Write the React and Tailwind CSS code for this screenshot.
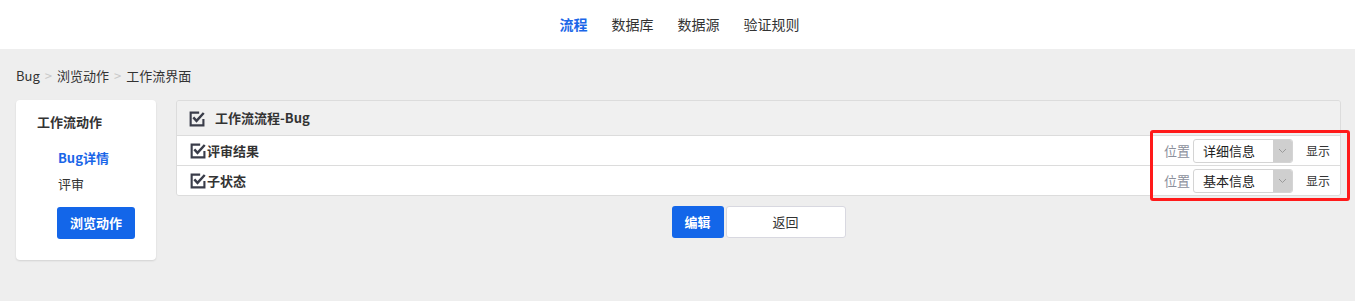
import React from "react";

function CheckIcon() {
  return (
    <svg width="17" height="17" viewBox="0 0 16 16" className="shrink-0">
      <path d="M10.5 2.5H2.5V14.5H14.5V8.5" fill="none" stroke="#3a3d4a" strokeWidth="2" />
      <path d="M5 7L8 10.2L14.8 2.8" fill="none" stroke="#3a3d4a" strokeWidth="2.3" />
    </svg>
  );
}

function SelectBox({ value }) {
  return (
    <div className="flex h-[24px] w-[100px] items-stretch rounded-[3px] border border-[#d4d4d4] bg-white">
      <span className="flex flex-1 items-center pl-[9px] text-[13px] text-[#222]">{value}</span>
      <span className="flex w-[19px] items-center justify-center rounded-r-[2px] bg-[#cfcfcf]">
        <svg width="9" height="6" viewBox="0 0 9 6">
          <path d="M1 1L4.5 4.5L8 1" fill="none" stroke="#9a9a9a" strokeWidth="1" />
        </svg>
      </span>
    </div>
  );
}

function FieldRow({ label, value }) {
  return (
    <div className="flex h-[30px] items-center border-t border-[#dcdcdc] bg-white pl-[12px] pr-[10px]">
      <CheckIcon />
      <span className="ml-[1px] text-[13px] font-bold text-[#333]">{label}</span>
      <div className="ml-auto flex items-center">
        <span className="mr-[3px] text-[13px] text-[#8b8f9c]">位置</span>
        <SelectBox value={value} />
        <span className="ml-[13px] text-[12px] text-[#333]">显示</span>
      </div>
    </div>
  );
}

export default function App() {
  const font = { fontFamily: '"Noto Sans CJK SC", "Noto Sans", sans-serif' };
  return (
    <div className="min-h-[301px] bg-[#eeeeee]" style={font}>
      {/* Top nav */}
      <div className="flex h-[49px] items-center justify-center gap-[24px] bg-white pl-[4px] text-[14px] text-[#333]">
        <span className="font-bold text-[#1a66e8]">流程</span>
        <span>数据库</span>
        <span>数据源</span>
        <span>验证规则</span>
      </div>

      {/* Breadcrumb */}
      <div className="flex items-center pl-[16px] pt-[17px] text-[13px] leading-[20px] text-[#333]">
        <span>Bug</span>
        <span className="mx-[5px] text-[#c8c8c8]">&gt;</span>
        <span>浏览动作</span>
        <span className="mx-[5px] text-[#c8c8c8]">&gt;</span>
        <span>工作流界面</span>
      </div>

      <div className="relative mt-[14px] flex items-start pl-[16px] pr-[14px]">
        {/* Left card */}
        <div className="h-[160px] w-[140px] shrink-0 rounded-[4px] bg-white shadow-[0_1px_2px_rgba(0,0,0,0.12)]">
          <div className="pl-[21px] pt-[12px] text-[13px] font-bold leading-[20px] text-[#333]">工作流动作</div>
          <div className="pl-[42px] pt-[16px] text-[13px] font-bold leading-[20px] text-[#1a66e8]">Bug详情</div>
          <div className="pl-[42px] pt-[6px] text-[13px] leading-[20px] text-[#333]">评审</div>
          <div className="pl-[41px] pt-[13px]">
            <button className="h-[32px] w-[78px] rounded-[3px] bg-[#1366e9] text-[13px] font-bold text-white">
              浏览动作
            </button>
          </div>
        </div>

        {/* Right panel */}
        <div className="ml-[20px] flex flex-1 flex-col">
          <div className="overflow-hidden rounded-[3px] border border-[#dcdcdc]">
            <div className="flex h-[34px] items-center bg-[#f0f0f0] pl-[11px]">
              <CheckIcon />
              <span className="ml-[10px] text-[13px] font-bold text-[#333]">工作流流程-Bug</span>
            </div>
            <FieldRow label="评审结果" value="详细信息" />
            <FieldRow label="子状态" value="基本信息" />
          </div>
          <div className="mt-[10px] flex justify-center gap-[2px]">
            <button className="h-[32px] w-[52px] rounded-[3px] bg-[#1366e9] text-[13px] font-bold text-white">编辑</button>
            <button className="h-[32px] w-[120px] rounded-[3px] border border-[#d8d8e0] bg-white text-[13px] text-[#333]">返回</button>
          </div>
        </div>

        {/* Annotation highlight */}
        <div className="pointer-events-none absolute left-[1150px] top-[30px] h-[71px] w-[200px] rounded-[3px] border-[3px] border-[#ff1a1a]" />
      </div>
    </div>
  );
}
